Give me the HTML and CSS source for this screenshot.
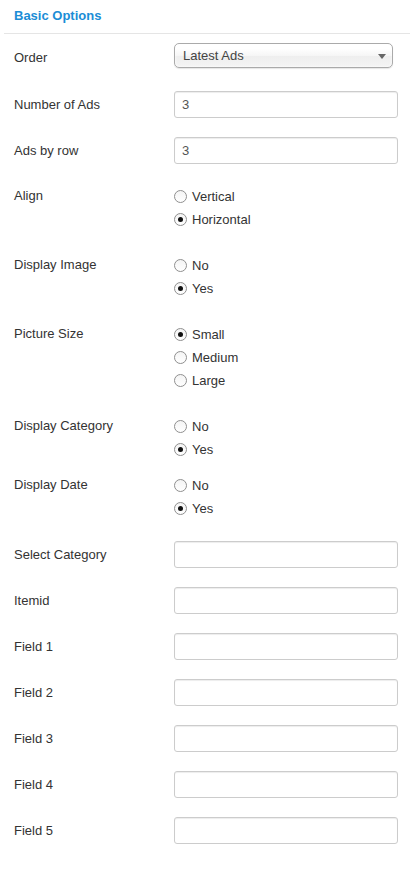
FILE: index.html
```html
<!DOCTYPE html>
<html>
<head>
<meta charset="utf-8">
<link rel="stylesheet" href="styles.css">
</head>
<body>
<div class="panel">
  <div class="header"><h3 class="title">Basic Options</h3></div>
  <form class="form">
    <div class="row row-select">
      <label class="lbl">Order</label>
      <div class="select"><span class="select-text">Latest Ads</span><span class="arrow"></span></div>
    </div>
    <div class="row row-text">
      <label class="lbl">Number of Ads</label>
      <input class="inp" type="text" value="3">
    </div>
    <div class="row row-text">
      <label class="lbl">Ads by row</label>
      <input class="inp" type="text" value="3">
    </div>
    <div class="row row-radio">
      <label class="lbl">Align</label>
      <div class="radios">
        <label class="opt"><input type="radio" name="align"><span>Vertical</span></label>
        <label class="opt"><input type="radio" name="align" checked><span>Horizontal</span></label>
      </div>
    </div>
    <div class="row row-radio">
      <label class="lbl">Display Image</label>
      <div class="radios">
        <label class="opt"><input type="radio" name="img"><span>No</span></label>
        <label class="opt"><input type="radio" name="img" checked><span>Yes</span></label>
      </div>
    </div>
    <div class="row row-radio">
      <label class="lbl">Picture Size</label>
      <div class="radios">
        <label class="opt"><input type="radio" name="size" checked><span>Small</span></label>
        <label class="opt"><input type="radio" name="size"><span>Medium</span></label>
        <label class="opt"><input type="radio" name="size"><span>Large</span></label>
      </div>
    </div>
    <div class="row row-radio row-tight">
      <label class="lbl">Display Category</label>
      <div class="radios">
        <label class="opt"><input type="radio" name="cat"><span>No</span></label>
        <label class="opt"><input type="radio" name="cat" checked><span>Yes</span></label>
      </div>
    </div>
    <div class="row row-radio">
      <label class="lbl">Display Date</label>
      <div class="radios">
        <label class="opt"><input type="radio" name="date"><span>No</span></label>
        <label class="opt"><input type="radio" name="date" checked><span>Yes</span></label>
      </div>
    </div>
    <div class="row row-text">
      <label class="lbl">Select Category</label>
      <input class="inp" type="text">
    </div>
    <div class="row row-text">
      <label class="lbl">Itemid</label>
      <input class="inp" type="text">
    </div>
    <div class="row row-text">
      <label class="lbl">Field 1</label>
      <input class="inp" type="text">
    </div>
    <div class="row row-text">
      <label class="lbl">Field 2</label>
      <input class="inp" type="text">
    </div>
    <div class="row row-text">
      <label class="lbl">Field 3</label>
      <input class="inp" type="text">
    </div>
    <div class="row row-text">
      <label class="lbl">Field 4</label>
      <input class="inp" type="text">
    </div>
    <div class="row row-text">
      <label class="lbl">Field 5</label>
      <input class="inp" type="text">
    </div>
  </form>
</div>
</body>
</html>
```
FILE: styles.css
```css
html, body {
  margin: 0;
  padding: 0;
  background: #ffffff;
}
body {
  font-family: "Liberation Sans", Arial, sans-serif;
  font-size: 13px;
  color: #333333;
}
.panel {
  width: 410px;
}
.header {
  margin-left: 4px;
  border-bottom: 1px solid #e5e5e5;
  padding: 6px 0 7px 10px;
}
.title {
  margin: 0;
  font-size: 13px;
  line-height: 20px;
  font-weight: bold;
  color: #1b8dd6;
}
.form {
  margin: 0;
  padding: 9px 0 0 14px;
}
.row {
  display: flex;
  align-items: flex-start;
  margin-bottom: 19px;
}
.lbl {
  width: 160px;
  flex: 0 0 160px;
  color: #333333;
}
.row-text .lbl {
  line-height: 27px;
}
.row-select {
  margin-bottom: 21px;
}
.row-select .lbl {
  line-height: 25px;
  padding-top: 2px;
}
.row-radio {
  padding-top: 2px;
  margin-bottom: 21px;
}
.row-radio .lbl {
  line-height: 23px;
  margin-top: -1px;
}
.row-tight {
  margin-bottom: 11px;
}
.select {
  box-sizing: border-box;
  width: 219px;
  height: 25px;
  border: 1px solid #aaaaaa;
  border-radius: 5px;
  background: linear-gradient(#ffffff 20%, #f6f6f6 50%, #eeeeee 52%, #f4f4f4 100%);
  box-shadow: inset 0 0 3px #ffffff, 0 1px 1px rgba(0, 0, 0, 0.1);
  display: flex;
  align-items: center;
  justify-content: space-between;
  padding: 0 6px 0 8px;
  color: #444444;
}
.select-text {
  line-height: 23px;
}
.arrow {
  width: 0;
  height: 0;
  border-left: 4px solid transparent;
  border-right: 4px solid transparent;
  border-top: 5px solid #666666;
  margin-top: 1px;
}
.inp {
  box-sizing: border-box;
  width: 224px;
  height: 27px;
  margin: 0;
  padding: 0 7px;
  border: 1px solid #cccccc;
  border-radius: 3px;
  box-shadow: inset 0 1px 1px rgba(0, 0, 0, 0.075);
  background: #ffffff;
  font-family: "Liberation Sans", Arial, sans-serif;
  font-size: 13px;
  color: #555555;
  outline: none;
}
.radios {
  display: flex;
  flex-direction: column;
}
.opt {
  display: flex;
  align-items: center;
  height: 23px;
  color: #333333;
}
.opt input {
  -webkit-appearance: none;
  appearance: none;
  box-sizing: border-box;
  width: 13px;
  height: 13px;
  margin: 0 5px 0 0;
  border: 1px solid #8f8f8f;
  border-radius: 50%;
  background: linear-gradient(#f4f4f4, #ffffff);
  position: relative;
}
.opt input:checked::after {
  content: "";
  position: absolute;
  left: 3px;
  top: 3px;
  width: 5px;
  height: 5px;
  border-radius: 50%;
  background: #111111;
}
```
